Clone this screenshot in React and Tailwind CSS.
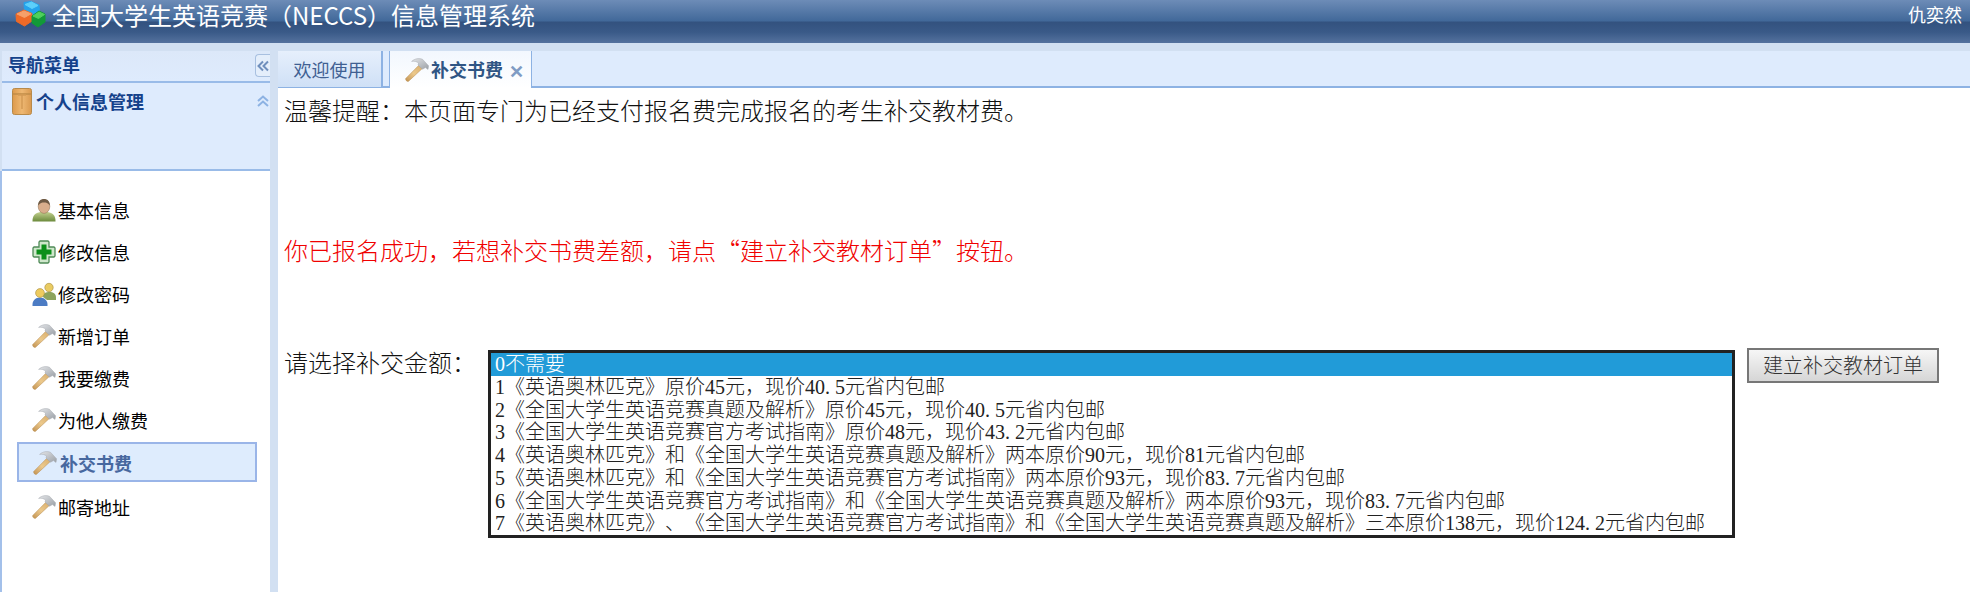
const SANS = { fontFamily: '"Noto Sans CJK SC", sans-serif' };

function Hammer({ className = "" }) {
  return (
    <svg viewBox="0 0 24 24" width="24" height="24" className={className}>
      <defs>
        <linearGradient id="hw" x1="0" y1="1" x2="1" y2="0">
          <stop offset="0" stopColor="#c39352" />
          <stop offset="0.5" stopColor="#ecc98c" />
          <stop offset="1" stopColor="#d9ae6c" />
        </linearGradient>
        <linearGradient id="hh" x1="0" y1="0" x2="1" y2="1">
          <stop offset="0" stopColor="#e4e6e9" />
          <stop offset="1" stopColor="#9ba0a6" />
        </linearGradient>
      </defs>
      <path d="M13.6 7.6 L17.2 10.6 L3.6 23.2 C2.2 24 0 22 0.8 20.4 Z" fill="url(#hw)" stroke="#b4884a" strokeWidth="0.5" />
      <path d="M6.6 3.4 C10 0.4 14 0 17.4 1.2 L23.6 7.8 L23 11.4 L20.4 9.6 L17.6 11.2 L13 7 L13.6 5 C11.6 3.4 9 3 6.6 3.4 Z" fill="url(#hh)" stroke="#a5a9ae" strokeWidth="0.5" />
    </svg>
  );
}

function Person() {
  return (
    <svg viewBox="0 0 24 24" width="24" height="24">
      <defs>
        <linearGradient id="pb" x1="0" y1="0" x2="0" y2="1">
          <stop offset="0" stopColor="#c3d08e" />
          <stop offset="1" stopColor="#6b8a3c" />
        </linearGradient>
      </defs>
      <path d="M0.5 23.5 C0.2 17.6 3.5 14.8 8.2 14 L15.8 14 C20.5 14.8 23.8 17.6 23.5 23.5 Z" fill="url(#pb)" />
      <ellipse cx="12" cy="8.4" rx="5.8" ry="7" fill="#d9ae8c" stroke="#8a6a4c" strokeWidth="0.5" />
      <path d="M6.2 7.5 C6 3 9 1 12 1 C15 1 18 3 17.8 7.5 C16 5 14 4.6 12 4.6 C10 4.6 8 5 6.2 7.5 Z" fill="#6e5a44" />
    </svg>
  );
}

function Plus() {
  return (
    <svg viewBox="0 0 24 24" width="24" height="24">
      <path d="M8 1 H16 L17 2 V7 H22 L23 8 V16 L22 17 H17 V22 L16 23 H8 L7 22 V17 H2 L1 16 V8 L2 7 H7 V2 Z" fill="#cfe7cb" stroke="#4f8a57" strokeWidth="1.3" />
      <path d="M9.5 4.5 H14.5 V9.5 H19.5 V14.5 H14.5 V19.5 H9.5 V14.5 H4.5 V9.5 H9.5 Z" fill="#0c8f1a" />
    </svg>
  );
}

function Users() {
  return (
    <svg viewBox="0 0 24 24" width="24" height="24">
      <path d="M11 15 C11 11 14 10 17.5 10 C21 10 24 11.5 24 15.5 L24 18 L15 18 Z" fill="#8da35c" />
      <circle cx="17" cy="5.5" r="4.2" fill="#e9cb62" stroke="#a5893a" strokeWidth="0.6" />
      <path d="M0.5 24 C0 18.5 3.5 15.5 8 15.5 C12.5 15.5 16 18.5 15.5 24 Z" fill="#4c7cc4" />
      <circle cx="8" cy="11" r="4.4" fill="#eecb5e" stroke="#a5893a" strokeWidth="0.6" />
    </svg>
  );
}

function Box() {
  return (
    <svg viewBox="0 0 20 27" width="20" height="27">
      <defs>
        <linearGradient id="bx" x1="0" y1="0" x2="1" y2="0">
          <stop offset="0" stopColor="#dd9a4c" />
          <stop offset="0.5" stopColor="#eeb873" />
          <stop offset="1" stopColor="#d9994f" />
        </linearGradient>
      </defs>
      <rect x="0.5" y="0.5" width="19" height="26" rx="2" fill="url(#bx)" stroke="#b88a4a" />
      <path d="M1 6 H19" stroke="#c08c48" strokeWidth="1.5" />
      <path d="M10 7 V21 M6 7 H14" stroke="#d39a54" strokeWidth="1.5" />
    </svg>
  );
}

function Logo() {
  return (
    <svg viewBox="0 0 31 27" width="31" height="27">
      <g strokeLinejoin="round">
        <path d="M9 1.5 L16 0.5 L24 4 L24.5 11 L17 15.5 L9.5 11 Z" fill="#24a3ec" stroke="#24a3ec" />
        <path d="M10 3.5 L16.5 1 L23 4.5 L17 7.5 Z" fill="#5cd0fb" stroke="#5cd0fb" />
        <path d="M1 13 L9 9 L17 12.5 L17 20 L9.5 25 L1.5 20.5 Z" fill="#ee6a28" stroke="#ee6a28" />
        <path d="M2 13 L9 10 L16 12.8 L9.5 16.5 Z" fill="#f6a06a" stroke="#f6a06a" />
        <path d="M17 15 L24 10 L30 13 L30 21 L23 26 L17 22 Z" fill="#129a38" stroke="#129a38" />
        <path d="M18 15 L24 11 L29.5 13.5 L23.5 17.5 Z" fill="#4fd05c" stroke="#4fd05c" />
      </g>
    </svg>
  );
}

function DoubleChevron({ dir }) {
  return (
    <svg viewBox="0 0 12 12" width="12" height="12">
      {dir === "left" ? (
        <path d="M6 1.5 L1.5 6 L6 10.5 M11 1.5 L6.5 6 L11 10.5" fill="none" stroke="#6f8fbd" strokeWidth="2" />
      ) : (
        <path d="M1 6 L6 1.5 L11 6 M1 11 L6 6.5 L11 11" fill="none" stroke="#8db2e3" strokeWidth="2" />
      )}
    </svg>
  );
}

const ITEMS = [
  ["基本信息", Person],
  ["修改信息", Plus],
  ["修改密码", Users],
  ["新增订单", Hammer],
  ["我要缴费", Hammer],
  ["为他人缴费", Hammer],
];

const OPTIONS = [
  "1《英语奥林匹克》原价45元，现价40.5元省内包邮",
  "2《全国大学生英语竞赛真题及解析》原价45元，现价40.5元省内包邮",
  "3《全国大学生英语竞赛官方考试指南》原价48元，现价43.2元省内包邮",
  "4《英语奥林匹克》和《全国大学生英语竞赛真题及解析》两本原价90元，现价81元省内包邮",
  "5《英语奥林匹克》和《全国大学生英语竞赛官方考试指南》两本原价93元，现价83.7元省内包邮",
  "6《全国大学生英语竞赛官方考试指南》和《全国大学生英语竞赛真题及解析》两本原价93元，现价83.7元省内包邮",
  "7《英语奥林匹克》、《全国大学生英语竞赛官方考试指南》和《全国大学生英语竞赛真题及解析》三本原价138元，现价124.2元省内包邮",
];

function OptionText({ text }) {
  const parts = text.split(".");
  return parts.map((p, i) =>
    i < parts.length - 1 ? (
      <span key={i}>
        {p}
        <span className="mr-[5px]">.</span>
      </span>
    ) : (
      <span key={i}>{p}</span>
    )
  );
}

export default function App() {
  return (
    <div className="w-[1970px] h-[592px] flex flex-col overflow-hidden bg-[#d2e0f2]" style={SANS}>
      <header className="h-[43px] shrink-0 flex justify-between pl-[15px] pr-[8px] bg-[linear-gradient(180deg,#6d8cb7_0%,#42699a_48%,#33527f_52%,#3a5a88_75%,#55729e_100%)]">
        <div className="flex items-start pt-[1px]">
          <Logo />
          <span className="ml-[6px] text-[24px] leading-[28px] text-white">全国大学生英语竞赛（NECCS）信息管理系统</span>
        </div>
        <span className="text-[18px] leading-[28px] text-white">仇奕然</span>
      </header>

      <div className="flex-1 flex pt-[8px] min-h-0">
        <aside className="w-[270px] shrink-0 flex flex-col">
          <div className="h-[32px] shrink-0 ml-[2px] flex items-start justify-between pl-[6px] border-b-2 border-[#99bbe8] bg-[linear-gradient(180deg,#dce8f9,#deebfd)]">
            <span className="text-[18px] leading-[26px] font-bold text-[#15428b]">导航菜单</span>
            <span className="mt-[3px] w-[15px] h-[23px] flex items-center justify-center rounded-l-[4px] border border-r-0 border-[#a8c0e0] bg-[#e4eefb]">
              <DoubleChevron dir="left" />
            </span>
          </div>
          <div className="h-[88px] shrink-0 ml-[2px] flex items-start justify-between pl-[10px] pr-[1px] pt-[5px] border-b-2 border-[#99bbe8] bg-[#deebfd]">
            <div className="flex items-start gap-[4px]">
              <Box />
              <span className="text-[18px] leading-[26px] font-bold text-[#15428b]">个人信息管理</span>
            </div>
            <span className="pt-[7px]"><DoubleChevron dir="up" /></span>
          </div>
          <nav className="flex-1 bg-white border-l-2 border-[#a3c0ea] pt-[18px] pl-[15px]">
            {ITEMS.map(([label, Icon]) => (
              <div key={label} className="h-[42px] pl-[15px] flex items-center gap-[2px] text-[18px] text-black">
                <Icon />
                <span>{label}</span>
              </div>
            ))}
            <div className="h-[40px] mt-[1px] w-[240px] pl-[14px] pt-[2px] flex items-center gap-[3px] border-2 border-[#9ab5e8] bg-[#deecfd] text-[18px] font-bold text-[#47689f]">
              <Hammer />
              <span>补交书费</span>
            </div>
            <div className="h-[42px] mt-[4px] pl-[15px] flex items-center gap-[2px] text-[18px] text-black">
              <Hammer />
              <span>邮寄地址</span>
            </div>
          </nav>
        </aside>

        <div className="w-[8px] shrink-0" />

        <main className="flex-1 flex flex-col min-w-0">
          <div className="h-[37px] shrink-0 flex items-stretch border-b-2 border-[#8db2e3] bg-[#deebfd]">
            <div className="w-[105px] h-[36px] flex items-center justify-center border-r-2 border-[#8db2e3] bg-[linear-gradient(180deg,#e6effc,#cfe0f6)] text-[18px] text-[#3f5f92]">欢迎使用</div>
            <div className="ml-[6px] w-[143px] h-[37px] pl-[15px] flex items-center border-x border-[#8db2e3] bg-[linear-gradient(180deg,#f2f7fe,#ffffff)]">
              <Hammer />
              <span className="ml-[2px] text-[18px] font-bold text-[#2f5584]">补交书费</span>
              <span className="ml-[6px] text-[18px] leading-none font-bold text-[#7f9cc4]">✕</span>
            </div>
          </div>
          <section
            className="flex-1 bg-white pt-[8px] pl-[6px] text-[24px] leading-[32px] font-light text-[#111] [text-spacing-trim:space-all]"
            style={{ fontFamily: '"Liberation Serif", "Noto Sans CJK SC", serif' }}
          >
            <p>温馨提醒：本页面专门为已经支付报名费完成报名的考生补交教材费。</p>
            <p className="mt-[106px] text-[#f00000]">
              你已报名成功，若想补交书费差额，请点
              <span className="font-['Noto_Sans_CJK_SC']">“</span>
              建立补交教材订单
              <span className="font-['Noto_Sans_CJK_SC']">”</span>
              按钮。
            </p>
            <div className="mt-[80px] flex items-start">
              <label className="w-[204px] shrink-0">请选择补交金额：</label>
              <ul className="mt-[2px] w-[1247px] h-[188px] shrink-0 border-[3px] border-[#222222] text-[20px] leading-[22.75px] text-[#222]">
                <li className="pl-[4px] bg-[#219bd8] text-white">0不需要</li>
                {OPTIONS.map((o) => (
                  <li key={o} className="pl-[4px] whitespace-nowrap"><OptionText text={o} /></li>
                ))}
              </ul>
              <button className="ml-[12px] w-[192px] h-[35px] border-2 border-[#777777] bg-[linear-gradient(180deg,#f6f6f6,#d6d6d6)] text-[20px] leading-none text-[#333]">建立补交教材订单</button>
            </div>
          </section>
        </main>
      </div>
    </div>
  );
}
